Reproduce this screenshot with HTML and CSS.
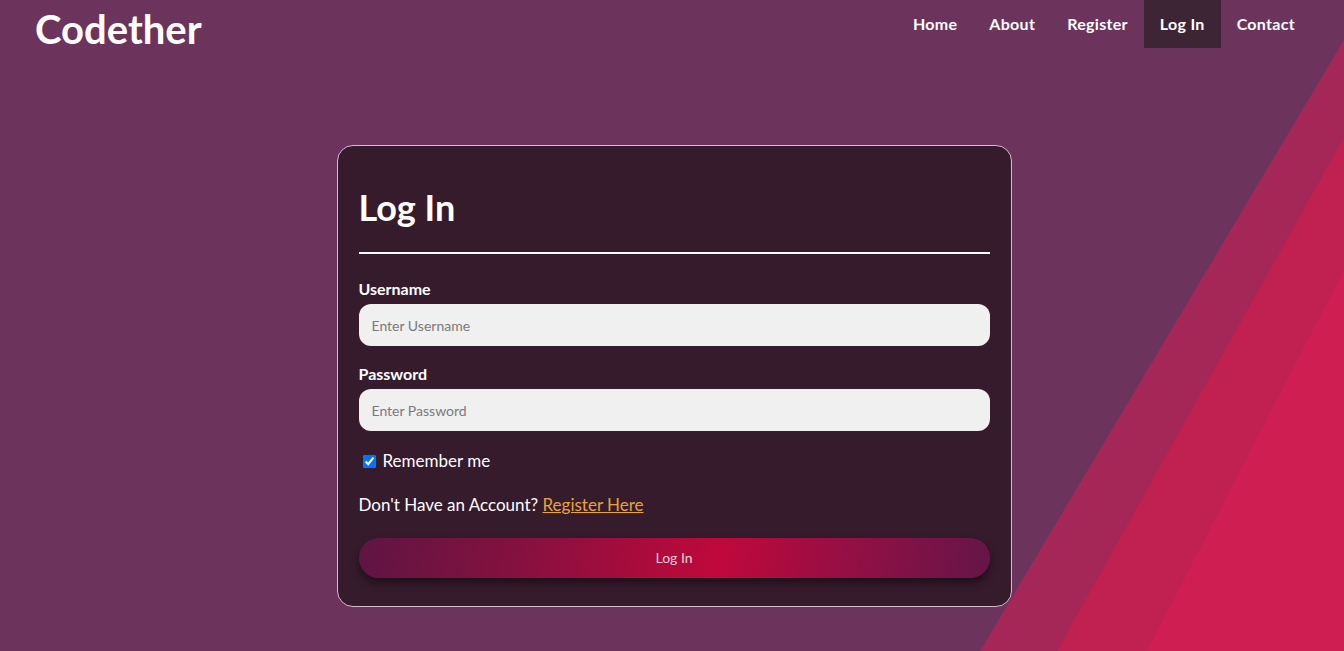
FILE: index.html
```html
<!DOCTYPE html>
<html lang="en">
<head>
<meta charset="utf-8">
<title>Codether - Log In</title>
<link rel="stylesheet" href="styles.css">
</head>
<body>
<svg class="bg-shapes" viewBox="0 0 1344 651" preserveAspectRatio="none" aria-hidden="true">
  <polygon points="1344,40 980,651 1344,651" fill="#a52757"/>
  <polygon points="1344,137 1057,651 1344,651" fill="#c02150"/>
  <polygon points="1344,270 1147,651 1344,651" fill="#cf1f52"/>
</svg>
<header class="topbar">
  <a class="logo" href="#">Codether</a>
  <nav>
    <ul class="nav-list">
      <li><a class="nav-link" href="#">Home</a></li>
      <li><a class="nav-link" href="#">About</a></li>
      <li><a class="nav-link" href="#">Register</a></li>
      <li><a class="nav-link active" href="#">Log In</a></li>
      <li><a class="nav-link" href="#">Contact</a></li>
    </ul>
  </nav>
</header>
<main class="content">
  <form class="card">
    <h1 class="card-title">Log In</h1>
    <hr class="divider">
    <label class="field-label" for="user">Username</label>
    <input class="field-input" id="user" type="text" placeholder="Enter Username">
    <label class="field-label" for="pass">Password</label>
    <input class="field-input" id="pass" type="password" placeholder="Enter Password">
    <label class="remember"><input type="checkbox" checked> Remember me</label>
    <p class="signup">Don't Have an Account? <a href="#">Register Here</a></p>
    <button class="submit" type="button">Log In</button>
  </form>
</main>
</body>
</html>
```
FILE: styles.css
```css
html, body {
  margin: 0;
  padding: 0;
}
body {
  position: relative;
  height: 651px;
  overflow: hidden;
  background: #6c345d;
  font-family: Lato, "Open Sans", sans-serif;
  color: #fff;
}
.bg-shapes {
  position: absolute;
  left: 0;
  top: 0;
  width: 100%;
  height: 100%;
  z-index: 0;
}
.topbar {
  position: relative;
  z-index: 1;
  display: flex;
  justify-content: space-between;
  align-items: flex-start;
  height: 48px;
}
.logo {
  padding-left: 35px;
  padding-top: 5px;
  font-size: 40px;
  font-weight: 700;
  color: #fff;
  text-decoration: none;
  line-height: 48px;
}
.nav-list {
  display: flex;
  list-style: none;
  margin: 0 33px 0 0;
  padding: 0;
}
.nav-link {
  display: block;
  height: 48px;
  line-height: 48px;
  padding: 0 16px;
  font-size: 16px;
  font-weight: 700;
  letter-spacing: 0.3px;
  color: #fff;
  text-decoration: none;
}
.nav-link.active {
  background: #3d2535;
}
.content {
  position: relative;
  z-index: 1;
  display: flex;
  justify-content: center;
  padding-top: 97px;
}
.card {
  width: 631px;
  margin-left: 4px;
  padding: 22px 21px 28px;
  background: #361b2d;
  border: 1px solid #d9b9cf;
  border-radius: 16px;
  display: flex;
  flex-direction: column;
}
.card-title {
  margin: 17px 0 0;
  font-size: 36px;
  font-weight: 700;
  line-height: 44px;
}
.divider {
  width: 100%;
  margin: 23px 0 25px;
  border: 0;
  height: 2px;
  background: #fff;
}
.field-label {
  font-size: 16px;
  font-weight: 700;
  line-height: 20px;
  margin-bottom: 5px;
}
.field-input {
  box-sizing: border-box;
  height: 42px;
  border: 0;
  border-radius: 12px;
  background: #f0f0f0;
  padding: 0 13px;
  font-family: inherit;
  font-size: 14px;
  margin-bottom: 18px;
}
.field-input::placeholder {
  color: #7a7a7a;
}
.remember {
  display: flex;
  align-items: center;
  gap: 7px;
  margin-top: 1px;
  font-size: 17px;
  line-height: 22px;
}
.remember input {
  margin: 0 0 0 4px;
  width: 13px;
  height: 13px;
}
.signup {
  margin: 22px 0 22px;
  font-size: 17px;
  line-height: 22px;
}
.signup a {
  color: #e8a33a;
}
.submit {
  height: 40px;
  border: 0;
  border-radius: 20px;
  background: linear-gradient(100deg, #5f1543 0%, #84113f 25%, #c0083b 57%, #8e1045 80%, #641548 100%);
  box-shadow: 0 5px 8px rgba(0, 0, 0, 0.45);
  color: #f4d0dc;
  font-family: inherit;
  font-size: 14px;
  line-height: 38px;
}
```
